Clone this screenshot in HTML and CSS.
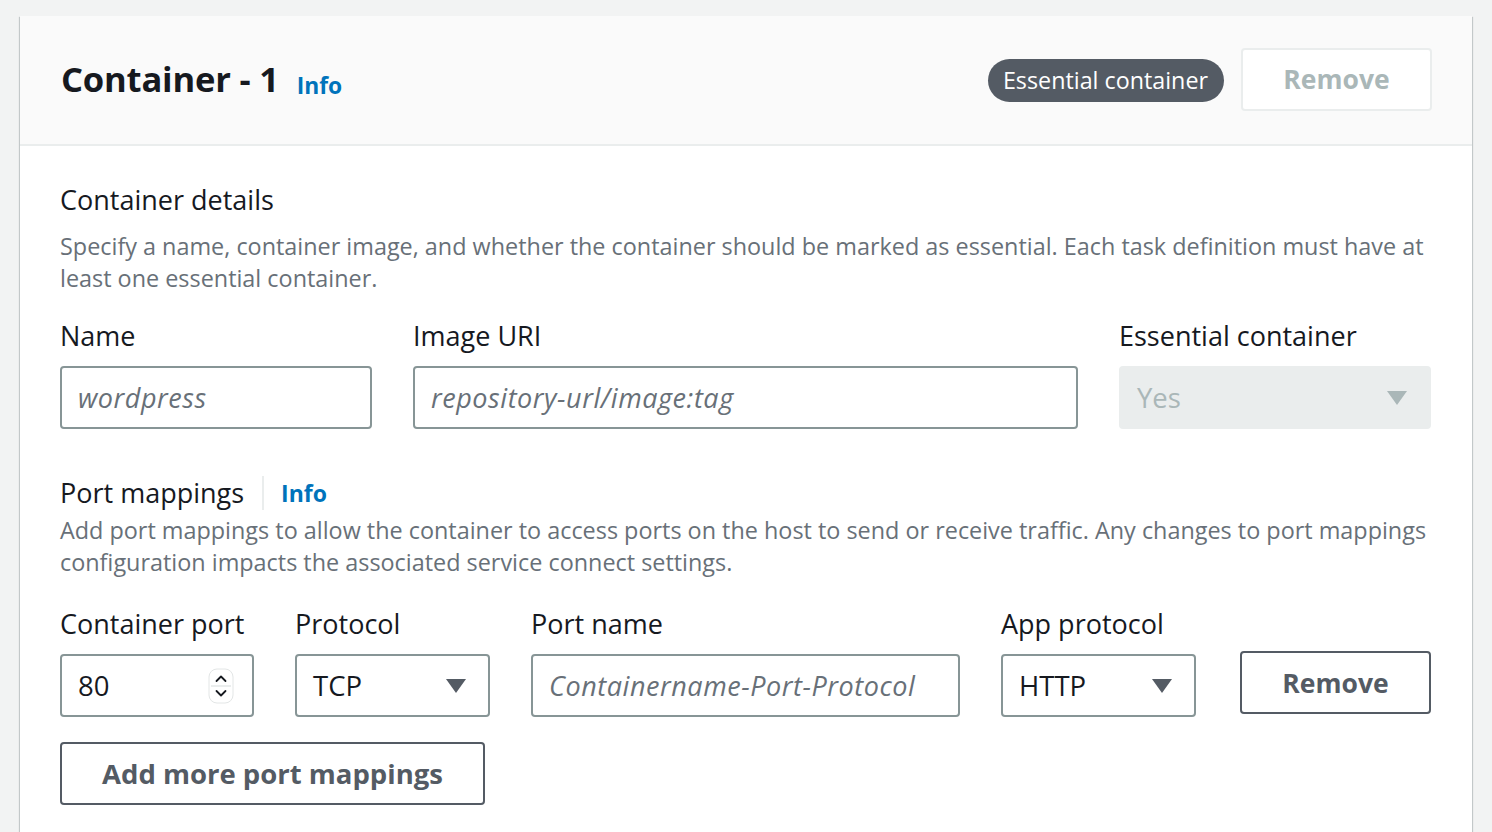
FILE: index.html
```html
<!DOCTYPE html>
<html>
<head>
<meta charset="utf-8">
<link rel="stylesheet" href="styles.css">
</head>
<body>
<div class="card">
  <div class="card-header">
    <div class="title-wrap">
      <h2 class="title">Container - 1</h2>
      <a class="info info-lg">Info</a>
    </div>
    <div class="header-actions">
      <span class="badge">Essential container</span>
      <button class="btn btn-disabled">Remove</button>
    </div>
  </div>
  <div class="card-body">
    <h3 class="section-title">Container details</h3>
    <p class="desc">Specify a name, container image, and whether the container should be marked as essential. Each task definition must have at least one essential container.</p>
    <div class="row row-details">
      <div class="field f-name">
        <label class="label">Name</label>
        <div class="input"><span class="placeholder">wordpress</span></div>
      </div>
      <div class="field f-uri">
        <label class="label">Image URI</label>
        <div class="input"><span class="placeholder">repository-url/image:tag</span></div>
      </div>
      <div class="field f-ess">
        <label class="label">Essential container</label>
        <div class="input select select-disabled"><span>Yes</span>
          <svg class="caret" width="20" height="14" viewBox="0 0 20 14"><path d="M0 0h20L10 14z"/></svg>
        </div>
      </div>
    </div>

    <div class="pm-head">
      <h3 class="section-title">Port mappings</h3>
      <span class="divider"></span>
      <a class="info">Info</a>
    </div>
    <p class="desc desc-pm">Add port mappings to allow the container to access ports on the host to send or receive traffic. Any changes to port mappings configuration impacts the associated service connect settings.</p>
    <div class="row row-ports">
      <div class="field f-port">
        <label class="label">Container port</label>
        <div class="input"><span class="value">80</span>
          <svg class="spinner" width="26" height="36" viewBox="0 0 26 36">
            <rect x="1" y="1" width="24" height="34" rx="8" fill="#fff" stroke="#e3e6e6" stroke-width="1"/>
            <line x1="3" y1="18" x2="23" y2="18" stroke="#d5dbdb" stroke-width="1"/>
            <path d="M8.5 13l4.5-4.5 4.5 4.5" fill="none" stroke="#16191f" stroke-width="1.8" stroke-linecap="round" stroke-linejoin="round"/>
            <path d="M8.5 23l4.5 4.5 4.5-4.5" fill="none" stroke="#16191f" stroke-width="1.8" stroke-linecap="round" stroke-linejoin="round"/>
          </svg>
        </div>
      </div>
      <div class="field f-proto">
        <label class="label">Protocol</label>
        <div class="input select"><span class="value">TCP</span>
          <svg class="caret" width="20" height="14" viewBox="0 0 20 14"><path d="M0 0h20L10 14z"/></svg>
        </div>
      </div>
      <div class="field f-pname">
        <label class="label">Port name</label>
        <div class="input"><span class="placeholder">Containername-Port-Protocol</span></div>
      </div>
      <div class="field f-app">
        <label class="label">App protocol</label>
        <div class="input select"><span class="value">HTTP</span>
          <svg class="caret" width="20" height="14" viewBox="0 0 20 14"><path d="M0 0h20L10 14z"/></svg>
        </div>
      </div>
      <div class="field f-remove">
        <button class="btn btn-normal">Remove</button>
      </div>
    </div>
    <button class="btn btn-normal btn-add">Add more port mappings</button>
  </div>
</div>
</body>
</html>
```
FILE: styles.css
```css
* { box-sizing: border-box; }
html, body { margin: 0; }
body {
  background: #f2f3f3;
  padding: 16px 20px 0 20px;
  font-family: "Open Sans", "Noto Sans", sans-serif;
  color: #16191f;
  height: 832px;
  overflow: hidden;
}
.card {
  width: 1452px;
  background: #fff;
  box-shadow: 0 1px 1px 0 rgba(0,28,36,.3), 1px 1px 1px 0 rgba(0,28,36,.15), -1px 1px 1px 0 rgba(0,28,36,.15);
  min-height: 840px;
}
.card-header {
  height: 130px;
  background: #fafafa;
  border-bottom: 2px solid #eaeded;
  display: flex;
  align-items: center;
  justify-content: space-between;
  padding: 0 40px 0 41px;
}
.title-wrap { display: flex; align-items: baseline; gap: 18px; margin-top: -2px; }
.title { margin: 0; font-size: 34.6px; font-weight: 700; line-height: 44px; letter-spacing: -0.2px; }
.info { color: #0073bb; font-weight: 700; font-size: 23px; text-decoration: none; }
.info-lg { font-size: 22.8px; position: relative; top: 2px; }
.header-actions { display: flex; align-items: center; gap: 17px; margin-top: -2px; }
.badge {
  background: #545b64;
  color: #fff;
  border-radius: 22px;
  height: 43px;
  padding: 0 16px 0 15px;
  display: inline-flex;
  align-items: center;
  font-size: 23.3px;
  margin-top: 2px;
}
.btn {
  font-family: inherit;
  background: #fff;
  border-radius: 4px;
  font-weight: 700;
  font-size: 26.5px;
  height: 63px;
  cursor: pointer;
}
.btn-disabled { border: 2px solid #eaeded; color: #aab7b8; width: 191px; }
.btn-normal { border: 2px solid #545b64; color: #545b64; }
.card-body { padding: 36px 40px 0 40px; }
.section-title { margin: 0; font-size: 27px; font-weight: 400; line-height: 36px; }
.desc { margin: 12px 0 0; font-size: 23.4px; line-height: 32px; color: #687078; }
.row { display: flex; gap: 41px; }
.row-details { margin-top: 24px; }
.field { display: flex; flex-direction: column; }
.label { font-size: 27px; line-height: 36px; margin-bottom: 12px; }
.input {
  height: 63px;
  border: 2px solid #879596;
  border-radius: 4px;
  display: flex;
  align-items: center;
  padding: 0 22px 0 16px;
  font-size: 27.5px;
}
.placeholder { color: #687078; font-style: italic; font-size: 27px; letter-spacing: 0.55px; }
.value { color: #16191f; }
.select { justify-content: space-between; }
.caret { fill: #545b64; }
.select-disabled { background: #eaeded; border-color: #eaeded; color: #aab7b8; }
.select-disabled .caret { fill: #aab7b8; }
.f-name { width: 312px; }
.f-uri { width: 665px; }
.f-ess { width: 312px; }
.pm-head { display: flex; align-items: center; margin-top: 46px; }
.divider { width: 2px; height: 34px; background: #eaeded; margin: 0 17px 0 18px; }
.pm-head .info { font-size: 23px; }
.desc-pm { margin-top: 3px; }
.row-ports { margin-top: 28px; align-items: flex-end; }
.f-port { width: 194px; }
.f-port .input { justify-content: space-between; padding-right: 18px; }
.f-proto { width: 195px; }
.f-pname { width: 429px; }
.f-app { width: 195px; margin-right: 3px; }
.f-remove { width: 191px; align-self: flex-start; padding-top: 45px; }
.f-remove .btn { width: 191px; }
.btn-add { margin-top: 25px; width: 425px; font-size: 27.5px; }
```
